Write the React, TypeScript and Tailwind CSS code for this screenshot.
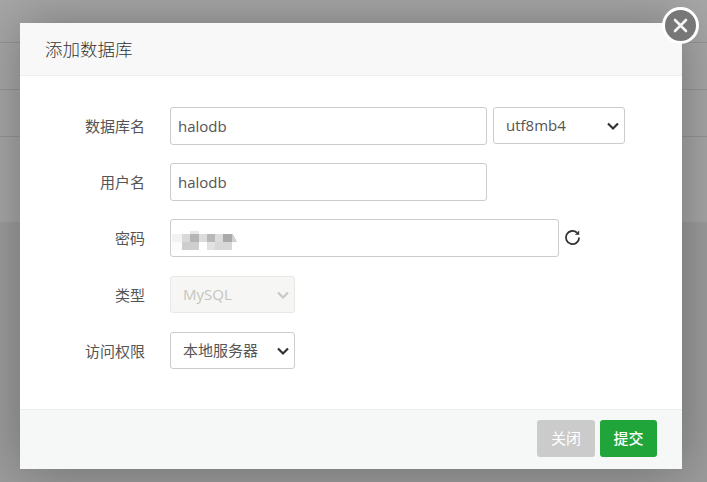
import React from "react";

const font = { fontFamily: '"Open Sans","Noto Sans CJK SC",sans-serif' };

function Row({ label, children }: { label: string; children: React.ReactNode }) {
  return (
    <div className="flex items-center">
      <label className="w-[125px] text-right text-[15px] leading-[20px] text-[#555]">{label}</label>
      <div className="ml-[25px] flex items-start">{children}</div>
    </div>
  );
}

function Chevron({ color }: { color: string }) {
  return (
    <svg className="pointer-events-none absolute right-[5px] top-1/2 -translate-y-1/2" width="14" height="10" viewBox="0 0 14 10" fill="none" stroke={color} strokeWidth="2.2">
      <path d="M2 2.5l5 5 5-5" />
    </svg>
  );
}

const inputCls =
  "h-[38px] rounded-[3px] border border-[#ccc] bg-white px-[7px] text-[15px] text-[#555] outline-none";
const selectCls =
  "h-[37px] w-full appearance-none rounded-[3px] border border-[#ccc] bg-white pl-[12px] text-[15px] text-[#555] outline-none";

export default function App() {
  return (
    <div className="relative h-[482px] w-[707px] overflow-hidden bg-white" style={font}>
      <div className="flex flex-col">
        <div className="h-[43px] border-b border-[#e5e5e5]" />
        <div className="h-[47px] border-b border-[#e5e5e5]" />
        <div className="h-[47px] border-b border-[#e5e5e5]" />
        <div className="h-[85px]" />
        <div className="h-[260px] bg-[#f0f0f0]" />
      </div>
      <div className="absolute inset-0 bg-black/35" />
      <div className="absolute left-[20px] top-[23px] flex h-[446px] w-[662px] flex-col bg-white shadow-[1px_1px_50px_rgba(0,0,0,0.3)]">
        <div className="flex h-[53px] items-center border-b border-[#eee] bg-[#f8f8f8] pl-[25px] text-[17.5px] font-light text-[#333]">
          添加数据库
        </div>
        <div className="flex flex-1 flex-col pt-[31px]">
          <div className="mb-[18px]">
            <Row label="数据库名">
              <input readOnly value="halodb" className={`${inputCls} w-[317px]`} />
              <div className="relative ml-[6px] w-[132px]">
                <select className={selectCls} defaultValue="utf8mb4">
                  <option>utf8mb4</option>
                </select>
                <Chevron color="#333" />
              </div>
            </Row>
          </div>
          <div className="mb-[18px]">
            <Row label="用户名">
              <input readOnly value="halodb" className={`${inputCls} w-[317px]`} />
            </Row>
          </div>
          <div className="mb-[19px]">
            <Row label="密码">
              <div className="relative h-[38px] w-[389px] rounded-[3px] border border-[#ccc] bg-white">
                <svg className="absolute left-0 top-[2px]" width="70" height="32" viewBox="0 0 70 32" shapeRendering="crispEdges">
                  <rect x="1" y="12" width="10" height="8" fill="#f2f2f2" />
                  <rect x="1" y="20" width="10" height="8" fill="#fbfbfb" />
                  <rect x="11" y="12" width="8" height="8" fill="#d9d9d9" />
                  <rect x="11" y="20" width="8" height="8" fill="#cdcdcd" />
                  <rect x="19" y="9" width="9" height="3" fill="#e8e8e8" />
                  <rect x="19" y="12" width="9" height="8" fill="#b5b5b5" />
                  <rect x="19" y="20" width="9" height="8" fill="#cfcfcf" />
                  <rect x="28" y="12" width="8" height="8" fill="#dcdcdc" />
                  <rect x="36" y="12" width="8" height="8" fill="#b8b8b8" />
                  <rect x="36" y="20" width="8" height="8" fill="#e2e2e2" />
                  <rect x="44" y="12" width="8" height="8" fill="#dcdcdc" />
                  <rect x="44" y="20" width="8" height="8" fill="#d8d8d8" />
                  <rect x="52" y="12" width="9" height="8" fill="#a9a9a9" />
                  <rect x="52" y="20" width="9" height="8" fill="#d8d8d8" />
                  <path d="M61 12h1l4 8h-5z" fill="#d0d0d0" />
                </svg>
              </div>
              <svg className="ml-[5px] mt-[10px]" width="17" height="17" viewBox="0 0 17 17" fill="none" stroke="#333" strokeWidth="1.8">
                <path d="M13 3.7A6.6 6.6 0 1 0 15.1 8.5" />
                <path d="M10.8 5.8h4.4V1.4z" fill="#333" stroke="none" />
              </svg>
            </Row>
          </div>
          <div className="mb-[19px]">
            <Row label="类型">
              <div className="relative w-[125px]">
                <select disabled className="h-[37px] w-full appearance-none rounded-[3px] border border-[#e8e8e6] bg-[#f6f6f4] pl-[12px] text-[15px] text-[#c5c5bd] opacity-100 outline-none" defaultValue="MySQL">
                  <option>MySQL</option>
                </select>
                <Chevron color="#c8c8c4" />
              </div>
            </Row>
          </div>
          <Row label="访问权限">
            <div className="relative w-[125px]">
              <select className={selectCls} defaultValue="本地服务器">
                <option>本地服务器</option>
              </select>
              <Chevron color="#333" />
            </div>
          </Row>
        </div>
        <div className="flex h-[60px] items-start justify-end gap-[5px] border-t border-[#eaeded] bg-[#f6f8f8] pr-[25px] pt-[10px]">
          <button className="h-[37px] w-[58px] rounded-[3px] bg-[#cbcbcb] text-[15px] text-white">关闭</button>
          <button className="h-[37px] w-[57px] rounded-[3px] bg-[#20a53a] text-[15px] font-medium text-white">提交</button>
        </div>
      </div>
      <div className="absolute left-[662px] top-[7px] flex h-[37px] w-[37px] items-center justify-center rounded-full border-[3px] border-white bg-[#777]">
        <svg width="17" height="17" viewBox="0 0 17 17" stroke="#f4f4f4" strokeWidth="2.6" strokeLinecap="round">
          <path d="M3 3l11 11M14 3L3 14" />
        </svg>
      </div>
    </div>
  );
}
